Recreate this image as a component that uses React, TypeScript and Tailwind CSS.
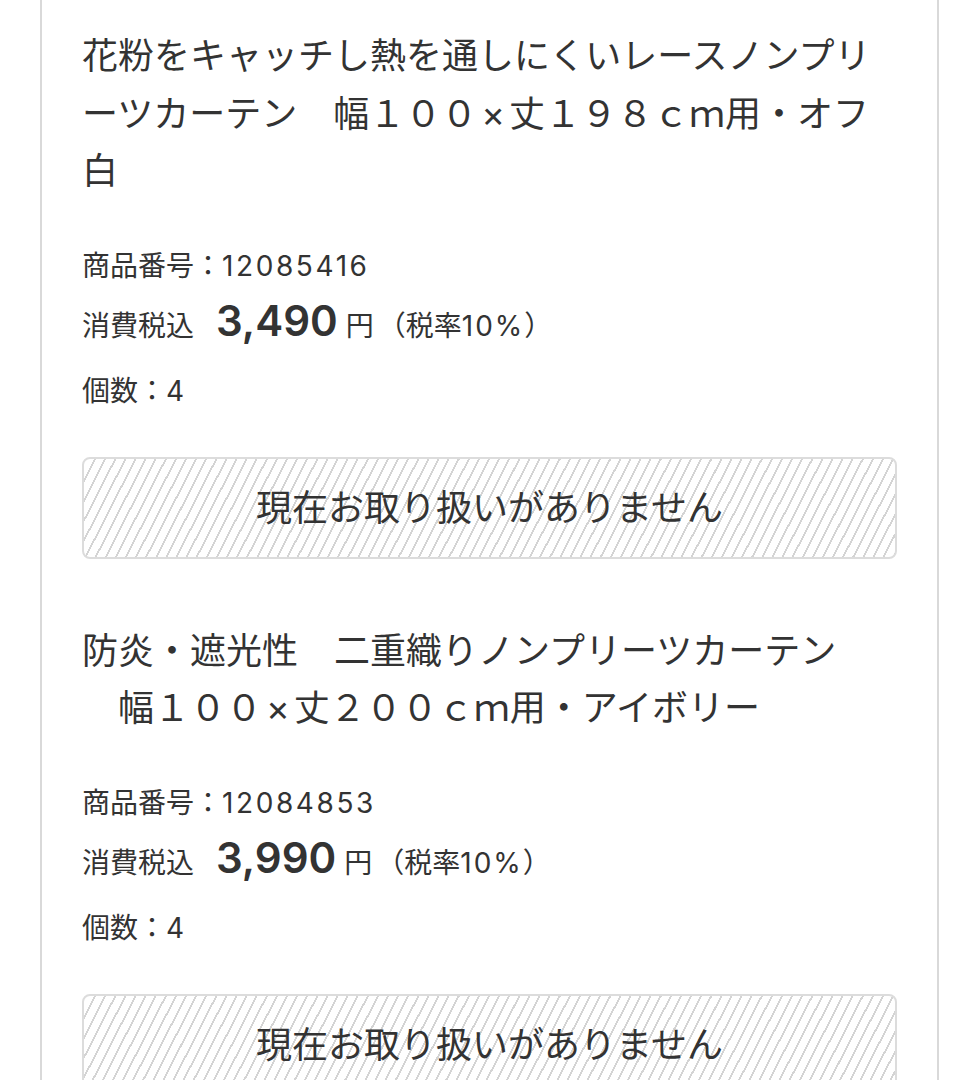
import React from "react";

type Item = { lines: React.ReactNode[]; code: string; price: string; qty: string };

const X = () => <span className="px-[4px] font-['Inter',sans-serif]">×</span>;

const items: Item[] = [
  {
    lines: [
      "花粉をキャッチし熱を通しにくいレースノンプリ",
      <>ーツカーテン　幅１００<X />丈１９８ｃｍ用・オフ</>,
      "白",
    ],
    code: "12085416",
    price: "3,490",
    qty: "4",
  },
  {
    lines: [
      "防炎・遮光性　二重織りノンプリーツカーテン",
      <>　幅１００<X />丈２００ｃｍ用・アイボリー</>,
    ],
    code: "12084853",
    price: "3,990",
    qty: "4",
  },
];

function ItemBlock({ item }: { item: Item }) {
  return (
    <div className="mb-[64px]">
      <div className="text-[36px] leading-[57.5px] text-[#333] whitespace-pre">
        {item.lines.map((l, i) => (
          <div key={i}>{l}</div>
        ))}
      </div>
      <div className="mt-[34px] text-[28px] text-[#333]">
        <div className="h-[62px] leading-[62px]">
          商品番号：<span className="tracking-[2.6px]">{item.code}</span>
        </div>
        <div className="h-[60px] leading-[58px] whitespace-nowrap">
          <span>消費税込</span>
          <span className="ml-[22px] text-[42px] leading-none font-semibold text-[#333]">{item.price}</span>
          <span className="ml-[8px]">円</span>
          <span className="ml-[4px]">
            （税率<span className="tracking-[2px]">10%</span>）
          </span>
        </div>
        <div className="mt-[3px] h-[62px] leading-[62px]">個数：{item.qty}</div>
      </div>
      <div className="mt-[35px] h-[102px] rounded-[8px] border-2 border-[#dcdcdc] bg-[repeating-linear-gradient(117deg,#d4d4d4_0px,#d4d4d4_1.8px,#ffffff_1.8px,#ffffff_9px)] flex items-center justify-center text-[36px] text-[#333]">
        現在お取り扱いがありません
      </div>
    </div>
  );
}

export default function App() {
  return (
    <div className="h-[1080px] w-full overflow-hidden bg-white font-['Inter','Noto_Sans_CJK_JP',sans-serif]">
      <div className="mx-[40px] h-[1200px] border-x-2 border-[#d9d9d9] bg-white px-[40px] pt-[28px]">
        {items.map((it, i) => (
          <ItemBlock key={i} item={it} />
        ))}
      </div>
    </div>
  );
}
